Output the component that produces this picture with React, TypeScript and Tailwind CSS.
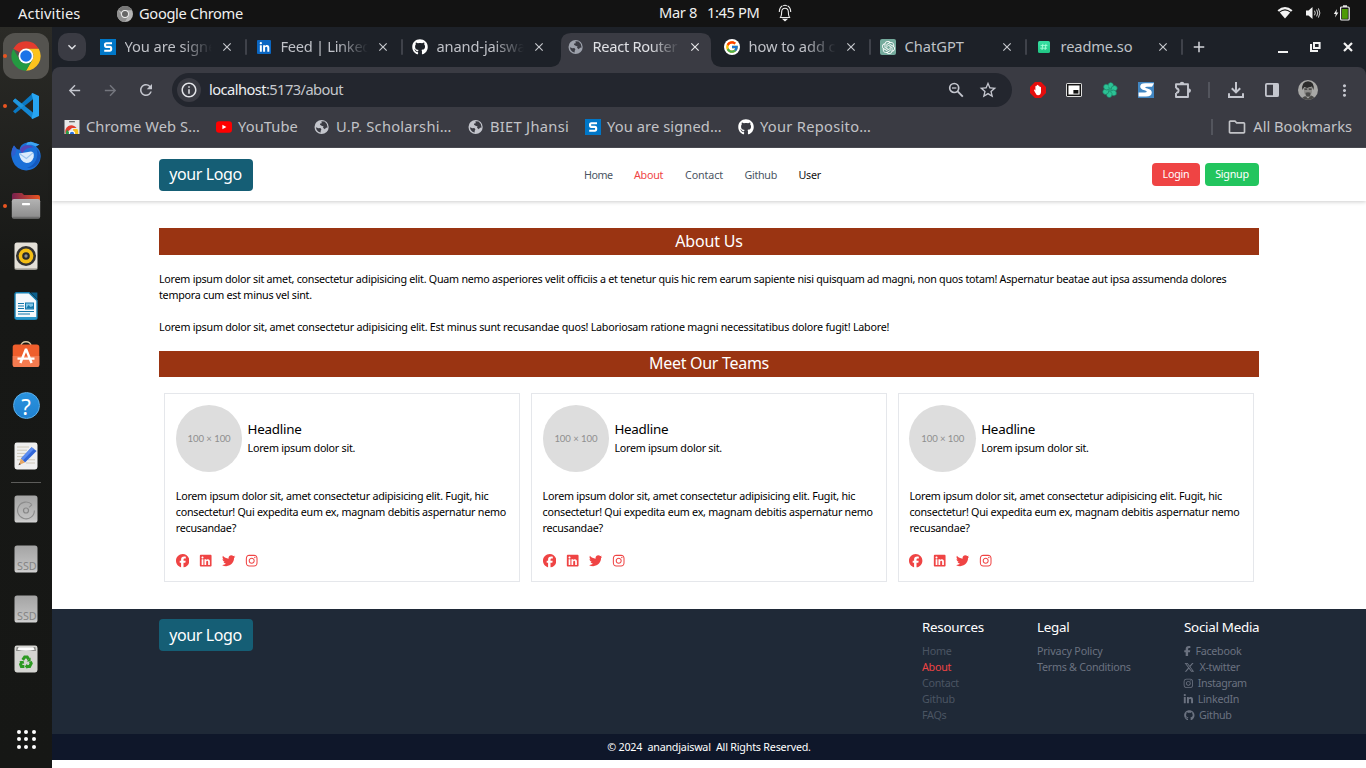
import type { ReactNode } from "react";
import { FaFacebook, FaFacebookF, FaGithub, FaInstagram, FaLinkedin, FaLinkedinIn, FaTwitter, FaXTwitter } from "react-icons/fa6";
import { FcGoogle } from "react-icons/fc";
import { MdArrowBack, MdArrowForward, MdRefresh, MdStarOutline, MdMoreVert, MdOutlineInfo, MdClose, MdAdd, MdExpandMore, MdOutlineFolder } from "react-icons/md";
import { SiOpenai } from "react-icons/si";

/* ---------- small drawings ---------- */

const Globe = ({ dim = false }: { dim?: boolean }) => (
  <svg width="16" height="16" viewBox="0 0 16 16">
    <circle cx="7.6" cy="8" r="7.1" fill={dim ? "#9da1ab" : "#c3c5cc"} />
    <path d="M1.9 8.2L4.4 9.2L6.4 9L7.4 10.4L6.6 12L6.8 13.6Q2.4 12.6 1.9 8.2Z M7.4 2.3L10.6 2.6Q13.4 4.6 13.6 8.4L12 8.8L10.8 10.2L9 8.8L9.6 7.4L7.6 6.8L6 5.8L6.2 4.4L7.8 4.2Z" fill="#3a3b43" />
  </svg>
);

const SBlue = () => (
  <svg width="16" height="16" viewBox="0 0 16 16">
    <rect width="16" height="16" fill="#0077c8" />
    <path d="M12 4.2H6.4Q5 4.2 5 6Q5 7.8 6.4 7.9H9.8Q11.2 8 11.2 9.8Q11.2 11.7 9.8 11.7H4.2" fill="none" stroke="#fff" strokeWidth="2.1" />
  </svg>
);

const LinkedInFav = () => (
  <span className="flex size-3.5 items-center justify-center rounded-[1px] bg-[#0a66c2] text-white"><FaLinkedinIn size={11} /></span>
);

const ChatFav = () => (
  <span className="flex size-4 items-center justify-center rounded-[2px] bg-[#74aa9c] text-white"><SiOpenai size={13} /></span>
);

const ReadmeFav = () => (
  <svg width="14" height="14" viewBox="0 0 14 14" className="mx-px">
    <defs><linearGradient id="rd" x1="0" y1="0" x2="0" y2="1"><stop offset="0" stopColor="#38e0a4" /><stop offset="1" stopColor="#20c583" /></linearGradient></defs>
    <rect x="1" y="1" width="12" height="12" rx="1.6" fill="url(#rd)" />
    <path d="M5.9 3.8L5 10M9 3.8L8.1 10M3.6 5.6H10.4M3.2 8.2H10" stroke="#a5ffd9" strokeWidth="0.9" />
  </svg>
);

const ChromeLogo = () => (
  <svg width="30" height="30" viewBox="0 0 48 48">
    <path d="M24 .5A23.5 23.5 0 0 1 44.35 12.25H24A11.75 11.75 0 0 0 13.8 18.1L3.65 12.25A23.5 23.5 0 0 1 24 .5Z" fill="#e33b2e" />
    <path d="M44.35 12.25A23.5 23.5 0 0 1 24 47.5L34.2 29.9A11.75 11.75 0 0 0 34.2 18.1L24 12.25Z" fill="#fcc31e" />
    <path d="M24 47.5A23.5 23.5 0 0 1 3.65 12.25L13.8 29.9A11.75 11.75 0 0 0 24 35.75Q30 35.75 34.2 29.9Z" fill="#249a41" />
    <circle cx="24" cy="24" r="11.9" fill="#fff" />
    <circle cx="24" cy="24" r="9.2" fill="#1a73e8" />
  </svg>
);

const GreyChrome = () => (
  <svg width="16" height="16" viewBox="0 0 16 16">
    <circle cx="8" cy="8" r="8" fill="#b4b4b4" />
    <path d="M8 0A8 8 0 0 1 15 4.2H8A3.9 3.9 0 0 0 4.6 6.1L1.2 3.8A8 8 0 0 1 8 0Z" fill="#777" />
    <path d="M1.2 3.8A8 8 0 0 0 8 16L11 10.2L5 10.5Z" fill="#8f8f8f" />
    <circle cx="8" cy="8" r="3.9" fill="#f0f0f0" />
    <circle cx="8" cy="8" r="3" fill="#666" />
  </svg>
);

const VsCode = () => (
  <svg width="28" height="28" viewBox="0 0 28 28">
    <path d="M1 19.2L3.2 21.4L21 7.2V1L3.4 17Z" fill="#0a78c2" />
    <path d="M1 8.8L3.2 6.6L21 20.4V27L1.2 9.8Z" fill="#1487d2" />
    <path d="M20.5 1L27 4V24L20.5 27L19.5 26.2L21 20.5V7.5L19.5 1.8Z" fill="#27a5f2" />
    <path d="M1 8.8L3.2 6.6L12 13.5L9 16Z" fill="#2196dc" />
  </svg>
);

const Thunderbird = () => (
  <svg width="30" height="30" viewBox="0 0 30 30">
    <path d="M3 4.5L6 8L8.6 8.8C9 5 11.6 2.2 16 1.4L20 .8L28.4 3.4L25 5.4C28.6 8 30 12 29.6 16A14.4 14.4 0 0 1 1.4 19C-.6 13.6.2 8.6 3 4.5Z" fill="#1b70d8" />
    <path d="M3 4.5L5.4 8.6L4.2 13.6L1 16Q-.4 9.4 3 4.5Z" fill="#2f5fcf" />
    <path d="M8.8 8.8C11 3.8 18 2.6 22.6 6.4C17 6.4 13.4 8 11.4 12.4Z" fill="#5746b5" />
    <path d="M17 1.2L20 .8L28.4 3.4L24.5 5.6C22 3.6 19.5 3.4 15.5 4C15.6 2.6 16 1.8 17 1.2Z" fill="#3da4f2" />
    <path d="M25.5 8C28 15 25 24 16 27C24 27.8 29.5 21.5 29.2 15Q28.6 10.6 25.5 8Z" fill="#1458bd" />
    <path d="M8 12.6L20 10.4Q23.6 11 22.6 16.4Q20.8 22 15.2 22Q9.4 21 8 12.6Z" fill="#dcecfc" />
    <path d="M8.6 12.8L15.4 17.4L22.2 11.6" fill="none" stroke="#9cc5ef" strokeWidth="1.2" />
  </svg>
);

const Files = () => (
  <svg width="30" height="28" viewBox="0 0 30 28">
    <defs>
      <linearGradient id="fo" x1="0" x2="1"><stop offset="0" stopColor="#77214f" /><stop offset="1" stopColor="#e95420" /></linearGradient>
      <linearGradient id="fg" x1="0" y1="0" x2="0" y2="1"><stop offset="0" stopColor="#b3b3b3" /><stop offset="1" stopColor="#8b8b8b" /></linearGradient>
    </defs>
    <path d="M3 1H11L13 3H27Q29 3 29 5V14H1V3Q1 1 3 1Z" fill="url(#fo)" />
    <rect x=".8" y="7" width="28.4" height="19.4" rx="2.2" fill="url(#fg)" />
    <rect x="1" y="24.8" width="28" height="1.6" rx=".8" fill="#6f6f6f" />
    <rect x="11" y="11" width="8" height="2.2" rx=".6" fill="#fff" />
  </svg>
);

const Rhythmbox = () => (
  <svg width="24" height="28" viewBox="0 0 24 28">
    <rect x=".5" y=".5" width="23" height="27" rx="2.5" fill="#e4e0d8" />
    <rect x=".5" y="26" width="23" height="1.5" rx=".7" fill="#b8b4ab" />
    <circle cx="12" cy="14" r="10" fill="#333" />
    <circle cx="12" cy="14" r="7.4" fill="#f4bd14" />
    <circle cx="12" cy="14" r="3.8" fill="#28282a" />
    <circle cx="12" cy="14" r="1.7" fill="#8a8a8a" />
  </svg>
);

const Writer = () => (
  <svg width="24" height="28" viewBox="0 0 24 28">
    <path d="M2.5 .7H15L23 8.5V25.5Q23 27.3 21 27.3H3Q1 27.3 1 25.5V2.5Q1 .7 2.5 .7Z" fill="#f4f8fb" stroke="#1680b4" strokeWidth="1.4" />
    <path d="M16.5 .4H23.4V7.5Z" fill="#0c5f8c" />
    <path d="M1 25H23V25.5Q23 27.3 21 27.3H3Q1 27.3 1 25.5Z" fill="#2a97ca" />
    <path d="M4 11.5H10M4 14H10M4 16.5H10M4 19.5H20M4 22H16" stroke="#1277a9" strokeWidth="1.2" />
    <rect x="11.5" y="11" width="8" height="6" fill="#7fc4e6" stroke="#1277a9" />
    <path d="M12 16.5L14.5 13L16.5 15L19 14V16.5Z" fill="#1277a9" />
  </svg>
);

const Software = () => (
  <svg width="28" height="28" viewBox="0 0 28 28" className="-mt-1">
    <path d="M9 6C9 .2 19 .2 19 6" fill="none" stroke="#d8c9a5" strokeWidth="1.5" />
    <rect x=".7" y="4.5" width="26.6" height="22.5" rx="2.6" fill="#ef5e2c" />
    <path d="M.7 16H27.3V24.4Q27.3 27 24.7 27H3.3Q.7 27 .7 24.4Z" fill="#f47b50" />
    <path d="M8.4 23L14 9L19.6 23M5.5 18.6H22.5" fill="none" stroke="#fff" strokeWidth="2.4" strokeLinejoin="bevel" />
  </svg>
);

const Help = () => (
  <span className="mb-px flex size-[27px] items-center justify-center rounded-full border border-[#5db0ea] bg-linear-to-b from-[#2a93df] to-[#1f80cf] text-[22px] leading-none text-white">?</span>
);

const TextEditor = () => (
  <svg width="24" height="28" viewBox="0 0 24 28">
    <rect x=".5" y=".5" width="23" height="27" rx="2.4" fill="#efefef" />
    <path d="M3 5H15M3 8.2H13M3 11.4H12M3 14.6H10M3 17.8H9M12 21H21M14 17.8H21" stroke="#cfc8ba" strokeWidth="1" />
    <path d="M17.6 5.2L22.6 9L11 20.6L7 16.4Z" fill="#3166d8" />
    <path d="M17.6 5.2L20 7L8.8 18.4L7 16.4Z" fill="#5b8cf0" />
    <path d="M7 16.4L11 20.6L4.8 23Z" fill="#e6a765" />
    <path d="M5.6 21L6.8 22.2L4.4 23.3Z" fill="#444" />
  </svg>
);

const DiskShell = ({ children }: { children: ReactNode }) => (
  <svg width="24" height="28" viewBox="0 0 24 28">
    <defs><linearGradient id="dk" x1="0" y1="0" x2="0" y2="1"><stop offset="0" stopColor="#a4a4a4" /><stop offset=".88" stopColor="#c2c2c2" /><stop offset="1" stopColor="#d6d6d6" /></linearGradient></defs>
    <rect x=".5" y=".5" width="23" height="27" rx="2.6" fill="url(#dk)" />
    {children}
  </svg>
);
const Hdd = () => (
  <DiskShell>
    <path d="M18 9.6A8.4 8.4 0 1 0 20.4 15.5M18 9.6L15 12.4" fill="none" stroke="#8c8c8c" strokeWidth="1.1" />
    <circle cx="12" cy="15.5" r="2.5" fill="none" stroke="#868686" strokeWidth="1.2" />
  </DiskShell>
);
const Ssd = () => (
  <DiskShell>
    <text x="3" y="24.5" fontSize="10.8" fontFamily="Noto Sans, sans-serif" fill="#858585">SSD</text>
  </DiskShell>
);
const Trash = () => (
  <svg width="24" height="28" viewBox="0 0 24 28">
    <rect x=".5" y=".5" width="23" height="27" rx="2.4" fill="#d5d5d2" />
    <path d="M2.6 2H21.4L22 6H2Z" fill="#8e8e8c" />
    <path d="M4.6 2.2H19.4L20.6 4.8Q12 6.8 3.4 4.8Z" fill="#fff" />
    <g fill="none" stroke="#2c9a22" strokeWidth="3">
      <path d="M8.7 14.8L10.7 12H13.2L14.8 14.4" />
      <path d="M16.4 16.5L17.2 18.5L15.6 21.4H12.8" />
      <path d="M10.4 21.4H7.4L6.6 19.4L7.9 16.8" />
    </g>
    <path d="M16.6 12.6V16.6H12.6ZM13.2 18.6V24L10.8 21.4ZM5 16H9.6L10.2 19Z" fill="#2c9a22" />
  </svg>
);

const AppGrid = () => (
  <span className="grid grid-cols-3 gap-[3.5px]">
    {[...Array(9)].map((_, i) => <span key={i} className="size-1 rounded-full bg-white" />)}
  </span>
);

/* ---------- desktop shell ---------- */

const TopBar = () => (
  <div className="flex h-[27px] shrink-0 items-center bg-[#131313] text-[14.67px] leading-[27px] text-[#f0f0f0]">
    <div className="w-[117px] pl-[18px] tracking-[0.14px]">Activities</div>
    <GreyChrome />
    <div className="w-[526px] pl-1.5 tracking-[-0.33px]">Google Chrome</div>
    <div className="-mt-0.5 w-[48px] tracking-[-0.35px]">Mar 8</div>
    <div className="-mt-0.5 w-[71px] tracking-[-0.38px]">1:45 PM</div>
    <svg width="14" height="18" viewBox="0 0 14 18" fill="none" stroke="#eee" strokeWidth="1.1" className="-mt-0.5">
      <path d="M2.5 13.5Q3.7 12 3.7 7.5Q3.9 4.2 7 4.2Q10.1 4.2 10.3 7.5Q10.3 12 11.5 13.5ZM1.3 8Q1.3 3.6 4.4 1.8M12.7 8Q12.7 3.6 9.6 1.8M5.2 1.8Q7 .8 8.8 1.8" />
      <path d="M5.4 15.3H8.6L7 16.7Z" fill="#eee" />
    </svg>
    <div className="ml-auto flex items-center pr-4 pb-px">
      <svg width="16" height="14" viewBox="0 0 16 14"><path d="M.5 4.2Q8-2.2 15.5 4.2L14 5.8Q8 .8 2 5.8Z" fill="#f2f2f2" /><path d="M2.8 6.5Q8 2.4 13.2 6.5L8 12.6Z" fill="#f2f2f2" /></svg>
      <svg width="16" height="14" viewBox="0 0 16 14" className="ml-3"><path d="M1 4.5H3.5L7.5 1V13L3.5 9.5H1Z" fill="#f2f2f2" /><path d="M9.5 4.7Q11 7 9.5 9.3M11.6 3.6Q14 7 11.6 10.4M13.4 2.4Q16.4 7 13.4 11.6" fill="none" stroke="#d8d8d8" strokeWidth="1" /></svg>
      <svg width="17" height="16" viewBox="0 0 17 16" className="ml-3"><path d="M4 4L.8 9H2.8L2 12.4L5.4 7.4H3.4Z" fill="#f2f2f2" /><rect x="7.6" y="2" width="8.6" height="13" rx="1" fill="none" stroke="#f2f2f2" strokeWidth="1.2" /><rect x="10" y=".3" width="4" height="1.6" fill="#f2f2f2" /><rect x="9" y="4" width="5.8" height="9.8" fill="#4e9a06" /></svg>
    </div>
  </div>
);

const DockItem = ({ children, running = false, active = false }: { children: ReactNode; running?: boolean; active?: boolean }) => (
  <div className="relative flex h-[50px] w-[52px] items-center justify-center">
    {running && <span className="absolute left-[3px] top-[23px] z-10 size-1 rounded-full bg-[#e95420]" />}
    <span className={active ? "flex size-[46px] items-center justify-center rounded-xl bg-[#54534f]" : "flex size-[46px] items-center justify-center"}>{children}</span>
  </div>
);

const Dock = () => (
  <div className="flex w-[52px] shrink-0 flex-col items-center bg-linear-to-b from-[#2b2b27] via-[#171816] via-33% to-[#161715] pt-1">
    <DockItem running active><ChromeLogo /></DockItem>
    <DockItem running><VsCode /></DockItem>
    <DockItem><Thunderbird /></DockItem>
    <DockItem running><Files /></DockItem>
    <DockItem><Rhythmbox /></DockItem>
    <DockItem><Writer /></DockItem>
    <DockItem><Software /></DockItem>
    <DockItem><Help /></DockItem>
    <DockItem><TextEditor /></DockItem>
    <div className="my-px h-px w-[30px] bg-[#5c5c5a]" />
    <DockItem><Hdd /></DockItem>
    <DockItem><Ssd /></DockItem>
    <DockItem><Ssd /></DockItem>
    <DockItem><Trash /></DockItem>
    <div className="mt-[30px]"><DockItem><AppGrid /></DockItem></div>
  </div>
);

/* ---------- browser frame ---------- */

const tabs: { icon: ReactNode; title: string; cls: string; active?: boolean; sep?: boolean; fade?: boolean }[] = [
  { icon: <SBlue />, title: "You are signe", cls: "tracking-[-0.05px]", sep: true, fade: true },
  { icon: <LinkedInFav />, title: "Feed | Linked", cls: "tracking-[-0.3px]", sep: true, fade: true },
  { icon: <FaGithub size={16} color="#fff" />, title: "anand-jaiswa", cls: "tracking-[-0.15px]", fade: true },
  { icon: <Globe dim />, title: "React Router", cls: "tracking-[-0.3px]", active: true, fade: true },
  { icon: <span className="flex size-4 items-center justify-center rounded-full bg-white"><FcGoogle size={14} /></span>, title: "how to add c", cls: "tracking-[-0.08px]", sep: true, fade: true },
  { icon: <ChatFav />, title: "ChatGPT", cls: "", sep: true },
  { icon: <ReadmeFav />, title: "readme.so", cls: "tracking-[-0.12px]", sep: true },
];

const TabStrip = () => (
  <div className="flex h-10 items-end bg-[#1d2128] text-[14.67px]">
    <div className="mb-1.5 ml-1.5 mr-1 flex size-7 items-center justify-center rounded-[10px] bg-[#3a3b43] text-[#e3e4e8]"><MdExpandMore size={16} /></div>
    {tabs.map((t) => (
      <div key={t.title} className="relative flex h-[34px] w-[156px] items-start px-[3px]">
        {t.active && (
          <svg width="170" height="34" viewBox="0 0 170 34" className="absolute -left-[7px] top-0"><path d="M0 34Q10 33 10 23V10Q10 0 20 0H150Q160 0 160 10V23Q160 33 170 34Z" fill="#3a3b43" /></svg>
        )}
        <div className="relative flex h-7 w-full items-center pl-[7px]">
          <span className="flex w-4 shrink-0 items-center justify-center">{t.icon}</span>
          <span className={`-mt-0.5 ml-[8.5px] w-[87px] shrink-0 overflow-hidden whitespace-nowrap leading-7 ${t.active ? "text-[#e0e1e5]" : "text-[#bfc1c7]"} ${t.cls} ${t.fade ? "mask-r-from-65% mask-r-to-100%" : ""}`}>{t.title}</span>
          <MdClose size={14} className={t.active ? "ml-[8.5px] shrink-0 text-[#e8e8ea]" : "ml-[8.5px] shrink-0 text-[#c7c9ce]"} />
        </div>
        {t.sep && <span className="absolute -right-px top-1.5 h-4 w-0.5 rounded-full bg-[#3f424a]" />}
      </div>
    ))}
    <div className="mb-[11px] ml-2 text-[#d3d5da]"><MdAdd size={18} /></div>
    <svg width="86" height="18" viewBox="0 0 86 18" className="mb-[11px] ml-auto mr-[7px]"><path d="M5 14H15" stroke="#f2f2f2" strokeWidth="2" /><path d="M38 6V13H45" fill="none" stroke="#f2f2f2" strokeWidth="2" /><rect x="41" y="5" width="5.6" height="5" fill="none" stroke="#f2f2f2" strokeWidth="2" /><path d="M71 5L79 13M79 5L71 13" stroke="#f2f2f2" strokeWidth="2.2" /></svg>
  </div>
);

const Cell = ({ children }: { children: ReactNode }) => <div className="flex h-[34px] w-9 items-center justify-center">{children}</div>;

const Toolbar = () => (
  <div className="flex h-[46px] items-center pl-1 text-[#c4c6ce]">
    <Cell><MdArrowBack size={17} /></Cell>
    <Cell><MdArrowForward size={17} color="#74767e" /></Cell>
    <Cell><MdRefresh size={18} /></Cell>
    <div className="mx-2 flex h-[34px] w-[840px] items-center rounded-full bg-[#23262e] pl-[5px] pr-3.5">
      <span className="flex size-6 items-center justify-center rounded-full bg-[#3a3b43]"><MdOutlineInfo size={18} color="#e3e4e8" /></span>
      <span className="-mt-0.5 ml-2 text-[14.67px] tracking-[-0.56px] text-[#c4c6cc]"><span className="text-[#eceef2]">localhost</span>:5173/about</span>
      <svg width="16" height="16" viewBox="0 0 16 16" fill="none" stroke="currentColor" strokeWidth="1.7" className="ml-auto"><circle cx="6.2" cy="6" r="4.5" /><path d="M9.4 9.2L14.8 14.6" strokeWidth="1.9" /><path d="M4 6H8.4" strokeWidth="1.3" /></svg>
      <MdStarOutline size={20} className="ml-3.5" />
    </div>
    <Cell>
      <svg width="16" height="16" viewBox="0 0 16 16"><path d="M5 0H11L16 5V11L11 16H5L0 11V5Z" fill="#e40d0d" /><path d="M5 10.2L3.9 8Q4.4 7 5.4 8.4V4.2Q6 3.4 6.7 4.2V3.2Q7.4 2.4 8.1 3.2V3.8Q8.9 3.2 9.5 4V5Q10.4 4.4 11 5.2V10Q10.6 13.2 8.2 13.2Q6.2 13.2 5 10.2Z" fill="#fff" /></svg>
    </Cell>
    <Cell>
      <svg width="16" height="16" viewBox="0 0 16 16"><rect x="0" y="1" width="16" height="14" rx="1.8" fill="#e8e8e8" /><rect x="1.7" y="2.7" width="12.6" height="10.6" fill="#fff" stroke="#151515" strokeWidth="1.5" /><rect x="7.4" y="8" width="5" height="3.6" fill="#111" /></svg>
    </Cell>
    <Cell>
      <svg width="16" height="16" viewBox="0 0 16 16">
        <circle cx="8" cy="8" r="5" fill="#22a57e" />
        {[0, 60, 120, 180, 240, 300].map((a) => (
          <path key={a} d="M8 6.6L6 4.6Q5.6 1 8.6.4Q11.2.6 11.6 3.2" transform={`rotate(${a} 8 8)`} fill="#2cc295" stroke="#1c7d63" strokeWidth=".55" />
        ))}
      </svg>
    </Cell>
    <Cell>
      <svg width="16" height="16" viewBox="0 0 16 16"><rect width="16" height="16" fill="#4186c2" /><path d="M16 1.2H7Q2.2 1.2 2.2 4.6Q2.2 7.4 6.6 8.3Q9 8.9 8.8 9.8Q8.6 10.6 6.6 10.6H.6V14.6H8Q13.8 14.4 13.8 10.6Q13.8 7.6 9.4 6.6Q7 6 7.2 5.4Q7.4 4.8 9 4.8H14Z" fill="#fff" /></svg>
    </Cell>
    <Cell>
      <svg width="18" height="18" viewBox="0 0 18 18" className="ml-0.5"><path d="M2 7.2V3.2H14V16H2V12M2 7.2Q4.6 7.4 4.6 9.6Q4.6 11.8 2 12" fill="none" stroke="currentColor" strokeWidth="1.9" strokeLinejoin="round" /><path d="M5.6 3.2Q5.8.8 8 .8Q10.2.8 10.4 3.2ZM14.4 7.2Q17 7.4 17 9.6Q17 11.8 14.4 12Z" fill="currentColor" /></svg>
    </Cell>
    <div className="flex w-[18px] justify-center"><span className="h-4 w-0.5 bg-[#53555d]" /></div>
    <Cell><svg width="18" height="18" viewBox="0 0 18 18" fill="none" stroke="currentColor" strokeWidth="2"><path d="M9 1V11M4.8 7.2L9 11.4L13.2 7.2M2 12.2V16H16V12.2" /></svg></Cell>
    <Cell><svg width="16" height="16" viewBox="0 0 16 16"><rect x="1.9" y="1.9" width="12.2" height="12.2" rx="1" fill="none" stroke="currentColor" strokeWidth="1.8" /><rect x="9" y="1.5" width="5.5" height="13" fill="currentColor" /></svg></Cell>
    <Cell>
      <svg width="20" height="20" viewBox="0 0 20 20">
        <defs><clipPath id="av"><circle cx="10" cy="10" r="10" /></clipPath></defs>
        <g clipPath="url(#av)"><rect width="20" height="20" fill="#a8a8a6" /><path d="M4.4 10Q3 2 10 1.2Q17 2 15.4 10L14 6.4L9 8L6.2 7Z" fill="#2b2b2b" /><path d="M6 7.4L9 8.2L14 7L14 12Q12.6 17 10 17Q7 16.6 6 12Z" fill="#8d8c89" /><path d="M6.4 9.2H9.2M10.8 9.2H13.6" stroke="#333" strokeWidth="1.2" /><path d="M7.4 12.8Q10 11.8 12.6 12.8L12 16.6H8.4Z" fill="#4a4a48" /><path d="M3 20Q5 16 8 16.4L10 18.6L13 15.6Q16 16 17 20Z" fill="#4a4a48" /></g>
      </svg>
    </Cell>
    <Cell><MdMoreVert size={19} /></Cell>
  </div>
);

const bookmarks: { icon: ReactNode; title: string; w: string; cls: string }[] = [
  {
    icon: <svg width="16" height="16" viewBox="0 0 16 16"><rect x=".5" y="1" width="15" height="14" fill="#e8e8e8" /><rect x="5" y="2.2" width="6" height="1" rx=".5" fill="#444" /><path d="M1.8 15A6.2 6.2 0 0 1 12.6 9H8L4.6 12Z" fill="#e33b2e" /><path d="M1.8 15Q1.6 12 3.2 10.4L6 15Z" fill="#2a9a44" /><path d="M9 10H13.4Q14.8 12.4 14.2 15H10Z" fill="#f9c21c" /><path d="M4.8 15A3.2 3.2 0 0 1 11.2 15Z" fill="#fff" /><path d="M5.8 15A2.2 2.2 0 0 1 10.2 15Z" fill="#2a73e2" /></svg>,
    title: "Chrome Web S…", w: "w-[152px]", cls: "tracking-[0.08px]",
  },
  {
    icon: <svg width="16" height="16" viewBox="0 0 16 16"><rect y="2.2" width="16" height="11.6" rx="3" fill="#f00" /><path d="M6.4 5.7L10.4 8L6.4 10.3Z" fill="#fff" /></svg>,
    title: "YouTube", w: "w-[98px]", cls: "tracking-[0.1px]",
  },
  { icon: <Globe />, title: "U.P. Scholarshi…", w: "w-[154px]", cls: "tracking-[0.25px]" },
  { icon: <Globe />, title: "BIET Jhansi", w: "w-[117px]", cls: "tracking-[0.3px]" },
  { icon: <SBlue />, title: "You are signed…", w: "w-[153px]", cls: "tracking-[0.1px]" },
  { icon: <FaGithub size={16} color="#fff" />, title: "Your Reposito…", w: "w-[160px]", cls: "tracking-[0.29px]" },
];

const BookmarksBar = () => (
  <div className="flex h-[35px] items-center border-b border-[#4c4d54] pb-[7px] pl-3 pr-3.5 text-[14.67px] text-[#c2c3c7]">
    {bookmarks.map((b) => (
      <div key={b.title} className={`flex items-center whitespace-nowrap ${b.w} ${b.cls}`}>
        <span className="w-[22px] shrink-0">{b.icon}</span><span className="-mt-0.5">{b.title}</span>
      </div>
    ))}
    <span className="ml-auto h-4 w-0.5 bg-[#53555d]" />
    <MdOutlineFolder size={20} className="ml-3.5" />
    <span className="-mt-0.5 ml-1.5">All Bookmarks</span>
  </div>
);

/* ---------- web page ---------- */

const Logo = ({ pad = "pb-0.5" }: { pad?: string }) => (
  <span className={`flex h-8 w-[94px] items-center justify-center rounded bg-[#155e75] pr-px text-[16px] tracking-[-0.4px] text-white ${pad}`}>your Logo</span>
);

const Nav = () => (
  <header className="h-[53px] shrink-0 bg-white shadow-[0_1px_4px_rgba(0,0,0,0.2)]">
    <div className="mx-[107px] flex h-full items-center">
      <div className="mt-px w-[425px]"><Logo /></div>
      <nav className="flex pt-px text-[#4b5563]">
        <span className="w-[50px] tracking-[-0.48px]">Home</span>
        <span className="w-[51px] text-[#ef4444]">About</span>
        <span className="w-[59.5px] tracking-[-0.11px]">Contact</span>
        <span className="w-[54px] tracking-[-0.3px]">Github</span>
        <span className="text-[#111]">User</span>
      </nav>
      <div className="ml-auto flex gap-[5px] text-white">
        <span className="flex h-[23px] w-12 items-center justify-center rounded bg-[#ef4444] pb-px">Login</span>
        <span className="flex h-[23px] w-[54px] items-center justify-center rounded bg-[#22c55e] pb-px">Signup</span>
      </div>
    </div>
  </header>
);

const Card = () => (
  <article className="h-[189px] w-[356px] border border-[#e5e7eb] pl-[10.8px] pt-[11px]">
    <div className="flex items-center">
      <span className="flex h-[67px] w-[66.6px] items-center justify-center rounded-full bg-[#ddd] font-[Lato] text-[9.6px] tracking-[-0.1px] text-[#8f8f8f]">100 × 100</span>
      <div className="ml-[5.2px]">
        <h3 className="-mt-[2px] mb-px text-[13.4px] leading-[19px] tracking-[-0.25px]">Headline</h3>
        <p>Lorem ipsum dolor sit.</p>
      </div>
    </div>
    <p className="mt-4 whitespace-nowrap">
      Lorem ipsum dolor sit, amet consectetur adipisicing elit. Fugit, hic<br />consectetur! Qui expedita eum ex, magnam debitis aspernatur nemo<br />recusandae?
    </p>
    <div className="mt-[18.4px] flex gap-[9.8px] text-[#ef4444]">
      <FaFacebook size={13.4} /><FaLinkedin size={13.4} /><FaTwitter size={13.4} /><FaInstagram size={13.4} />
    </div>
  </article>
);

const About = () => (
  <main className="mx-[107px] flex h-[408px] shrink-0 flex-col pt-[27px]">
    <h2 className="h-[27px] bg-[#9a3412] text-center text-[16px] leading-[26px] tracking-[-0.2px] text-white">About Us</h2>
    <p className="mt-4 whitespace-nowrap tracking-[-0.255px]">
      Lorem ipsum dolor sit amet, consectetur adipisicing elit. Quam nemo asperiores velit officiis a et tenetur quis hic rem earum sapiente nisi quisquam ad magni, non quos totam! Aspernatur beatae aut ipsa assumenda dolores<br />tempora cum est minus vel sint.
    </p>
    <p className="mt-4 tracking-[-0.238px]">Lorem ipsum dolor sit, amet consectetur adipisicing elit. Est minus sunt recusandae quos! Laboriosam ratione magni necessitatibus dolore fugit! Labore!</p>
    <h2 className="mt-4 h-[26px] bg-[#9a3412] text-center text-[16px] leading-[25px] tracking-[-0.29px] text-white">Meet Our Teams</h2>
    <div className="mt-4 flex gap-[10.8px] px-[5px]"><Card /><Card /><Card /></div>
  </main>
);

const Heading = ({ children }: { children: ReactNode }) => <h3 className="mb-[7px] text-[13.4px] leading-[17px] tracking-[-0.28px] text-white">{children}</h3>;

const Footer = () => (
  <footer>
    <div className="flex h-[125px] bg-[#1f2937] pl-[107px] pt-2.5">
      <div className="w-[763px]"><Logo pad="pb-0" /></div>
      <div className="w-[115px] text-[#4b5563]">
        <Heading>Resources</Heading>
        <p>Home</p><p className="text-[#ef4444]">About</p><p>Contact</p><p>Github</p><p>FAQs</p>
      </div>
      <div className="w-[147px] text-[#6b7280]">
        <Heading>Legal</Heading>
        <p className="tracking-[-0.15px]">Privacy Policy</p><p>Terms &amp; Conditions</p>
      </div>
      <div className="text-[#6b7280]">
        <Heading>Social Media</Heading>
        <p className="flex items-center"><FaFacebookF size={10.7} className="-ml-[2px]" /><span className="ml-[2.7px]">Facebook</span></p>
        <p className="flex items-center"><FaXTwitter size={10.7} /><span className="ml-[4.7px]">X-twitter</span></p>
        <p className="flex items-center"><FaInstagram size={10.7} className="-ml-px" /><span className="ml-[4px] tracking-[-0.34px]">Instagram</span></p>
        <p className="flex items-center"><FaLinkedinIn size={10.7} className="-ml-px" /><span className="ml-[4px]">LinkedIn</span></p>
        <p className="flex items-center"><FaGithub size={10.7} /><span className="ml-[4.3px]">Github</span></p>
      </div>
    </div>
    <p className="h-[26px] whitespace-pre bg-[#0f172a] text-center leading-[26px] tracking-[-0.2px] text-white">© 2024  anandjaiswal  All Rights Reserved.</p>
  </footer>
);

export default function App() {
  return (
    <div className="flex h-[768px] w-[1366px] flex-col overflow-hidden bg-white font-['Noto_Sans',sans-serif]">
      <TopBar />
      <div className="flex flex-1">
        <Dock />
        <div className="flex w-[1314px] flex-col">
          <TabStrip />
          <div className="bg-[#1d2128]"><div className="rounded-t-lg bg-[#3a3b43]"><Toolbar /><BookmarksBar /></div></div>
          <div className="flex flex-1 flex-col text-[10.72px] leading-4 tracking-[-0.26px] text-black">
            <Nav />
            <About />
            <Footer />
          </div>
        </div>
      </div>
    </div>
  );
}
